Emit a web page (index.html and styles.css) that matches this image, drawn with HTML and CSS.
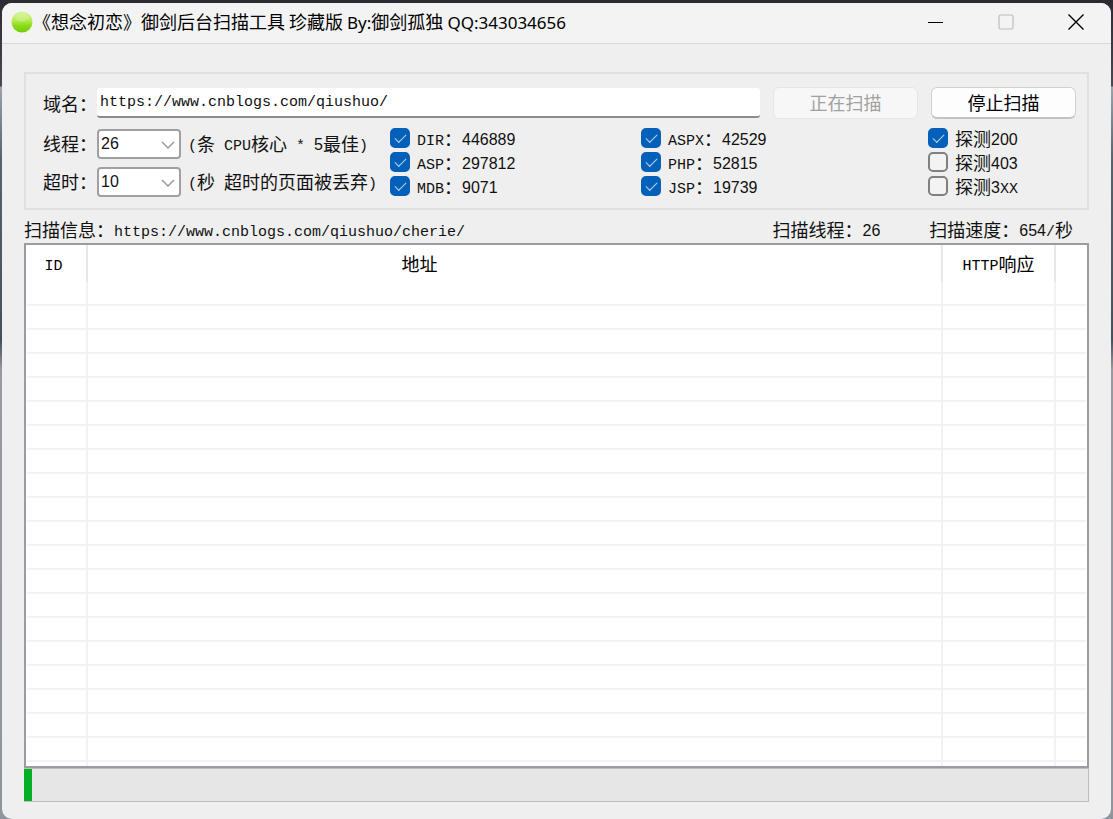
FILE: index.html
```
<!DOCTYPE html>
<html lang="zh-CN">
<head>
<meta charset="utf-8">
<title>御剑后台扫描工具</title>
<link rel="stylesheet" href="styles.css">
</head>
<body>
<div class="window">
  <header class="titlebar">
    <svg class="app-icon" width="22" height="22" viewBox="0 0 22 22" aria-hidden="true">
      <defs>
        <linearGradient id="ball" x1="0" y1="0" x2="0" y2="1">
          <stop offset="0" stop-color="#d8f59a"/>
          <stop offset="0.4" stop-color="#b9ec58"/>
          <stop offset="0.7" stop-color="#88da14"/>
          <stop offset="1" stop-color="#74cc08"/>
        </linearGradient>
      </defs>
      <circle cx="11" cy="11" r="10.5" fill="url(#ball)"/>
      <ellipse cx="11" cy="6.5" rx="7" ry="4" fill="#e6fabb" opacity="0.3"/>
    </svg>
    <h1 class="title">《想念初恋》御剑后台扫描工具 珍藏版 <span class="title-latin">By:</span>御剑孤独 <span class="title-latin">QQ:343034656</span></h1>
    <div class="window-buttons">
      <button type="button" class="window-button" aria-label="最小化"><svg width="16" height="16" viewBox="0 0 16 16"><path d="M0 8.5H15" stroke="#000" fill="none"/></svg></button>
      <button type="button" class="window-button" aria-label="最大化" disabled><svg width="16" height="16" viewBox="0 0 16 16"><rect x="1" y="1" width="14" height="14" rx="1.5" stroke="#bdbdbd" stroke-width="1.2" fill="none"/></svg></button>
      <button type="button" class="window-button" aria-label="关闭"><svg width="16" height="16" viewBox="0 0 16 16"><path d="M.5 .5L15.500 15.500M15.500 .5L.5 15.500" stroke="#000" stroke-width="1.400" fill="none"/></svg></button>
    </div>
  </header>

  <main class="content">
    <form class="panel">
      <div class="domain-row">
        <label for="domain">域名：</label>
        <input class="domain" id="domain" type="text" value="https://www.cnblogs.com/qiushuo/">
        <button type="button" class="action" disabled>正在扫描</button>
        <button type="button" class="action">停止扫描</button>
      </div>
      <div class="options">
        <div class="limits">
          <div class="limit">
            <label for="threads">线程：</label>
            <span class="combo">
              <select id="threads"><option>26</option></select>
              <svg class="arrow" width="14" height="8" viewBox="0 0 14 8" aria-hidden="true"><path d="M1 1L7 7L13 1"/></svg>
            </span>
            <span class="hint"><span class="mono">(</span>条<span class="mono"> CPU</span>核心<span class="mono"> * </span><span class="num">5</span>最佳<span class="mono">)</span></span>
          </div>
          <div class="limit">
            <label for="timeout">超时：</label>
            <span class="combo">
              <select id="timeout"><option>10</option></select>
              <svg class="arrow" width="14" height="8" viewBox="0 0 14 8" aria-hidden="true"><path d="M1 1L7 7L13 1"/></svg>
            </span>
            <span class="hint"><span class="mono">(</span>秒<span class="mono"> </span>超时的页面被丢弃<span class="mono">)</span></span>
          </div>
        </div>
        <div class="checks">
          <label class="check"><input type="checkbox" checked><span><span class="mono">DIR</span>：<span class="num">446889</span></span></label>
          <label class="check"><input type="checkbox" checked><span><span class="mono">ASP</span>：<span class="num">297812</span></span></label>
          <label class="check"><input type="checkbox" checked><span><span class="mono">MDB</span>：<span class="num">9071</span></span></label>
        </div>
        <div class="checks">
          <label class="check"><input type="checkbox" checked><span><span class="mono">ASPX</span>：<span class="num">42529</span></span></label>
          <label class="check"><input type="checkbox" checked><span><span class="mono">PHP</span>：<span class="num">52815</span></span></label>
          <label class="check"><input type="checkbox" checked><span><span class="mono">JSP</span>：<span class="num">19739</span></span></label>
        </div>
        <div class="checks">
          <label class="check"><input type="checkbox" checked><span>探测<span class="num">200</span></span></label>
          <label class="check"><input type="checkbox"><span>探测<span class="num">403</span></span></label>
          <label class="check"><input type="checkbox"><span>探测<span class="num">3</span><span class="mono">XX</span></span></label>
        </div>
      </div>
    </form>

    <div class="status">
      <span class="status-url">扫描信息：<span class="mono">https://www.cnblogs.com/qiushuo/cherie/</span></span>
      <span>扫描线程：<span class="num">26</span></span>
      <span class="status-speed">扫描速度：<span class="num">654</span><span class="mono">/</span>秒</span>
    </div>

    <div class="list">
      <table class="results">
        <colgroup><col class="col-id"><col><col class="col-http"><col class="col-rest"></colgroup>
        <thead><tr><th class="id"><span class="mono">ID</span></th><th class="address">地址</th><th><span class="mono">HTTP</span>响应</th><th></th></tr></thead>
        <tbody>
          <tr><td></td><td></td><td></td><td></td></tr>
          <tr><td></td><td></td><td></td><td></td></tr>
          <tr><td></td><td></td><td></td><td></td></tr>
          <tr><td></td><td></td><td></td><td></td></tr>
          <tr><td></td><td></td><td></td><td></td></tr>
          <tr><td></td><td></td><td></td><td></td></tr>
          <tr><td></td><td></td><td></td><td></td></tr>
          <tr><td></td><td></td><td></td><td></td></tr>
          <tr><td></td><td></td><td></td><td></td></tr>
          <tr><td></td><td></td><td></td><td></td></tr>
          <tr><td></td><td></td><td></td><td></td></tr>
          <tr><td></td><td></td><td></td><td></td></tr>
          <tr><td></td><td></td><td></td><td></td></tr>
          <tr><td></td><td></td><td></td><td></td></tr>
          <tr><td></td><td></td><td></td><td></td></tr>
          <tr><td></td><td></td><td></td><td></td></tr>
          <tr><td></td><td></td><td></td><td></td></tr>
          <tr><td></td><td></td><td></td><td></td></tr>
          <tr><td></td><td></td><td></td><td></td></tr>
          <tr><td></td><td></td><td></td><td></td></tr>
          <tr><td></td><td></td><td></td><td></td></tr>
        </tbody>
      </table>
    </div>
    <progress class="progress" value="8" max="1063" aria-label="扫描进度"></progress>
  </main>
</div>
</body>
</html>
```

FILE: styles.css
```
* {
  box-sizing: border-box;
}

body {
  margin: 0;
  min-height: 100vh;
  padding: 3px 2px 0;
  display: flex;
  background: linear-gradient(#2b2932 0, #4a4850 86px, #9aa3aa 87px, #55636d 160px, #46505a 340px, #9a999f 370px, #8f959d 100%);
  font-family: "Liberation Sans", "Noto Sans CJK SC", sans-serif;
  font-size: 18px;
  line-height: 24px;
  color: #111;
}

.window {
  flex: 1;
  min-width: 0;
  display: flex;
  flex-direction: column;
  background: #efefef;
  border-radius: 10px;
  overflow: hidden;
}

.titlebar {
  display: flex;
  align-items: center;
  height: 41px;
  padding: 0 0 2px 9px;
  background: #f3f3f3;
  border-bottom: 1px solid #d9d9d9;
}

.title {
  flex: 1;
  margin: 0;
  font-family: "Noto Sans CJK SC", sans-serif;
  font-size: 18px;
  font-weight: 400;
  color: #000;
  white-space: nowrap;
}

.title-latin {
  font-family: "Noto Sans", sans-serif;
  font-size: 17px;
}

.window-buttons {
  display: flex;
}

.window-button {
  width: 70px;
  height: 38px;
  padding: 0;
  border: 0;
  background: none;
  display: grid;
  place-items: center;
}

.content {
  flex: 1;
  display: flex;
  flex-direction: column;
  padding: 28px 22px 17px;
}

.panel {
  padding: 13px 11px 10px 17px;
  border: 2px solid #e0e0e0;
  font-family: "Noto Sans CJK SC", sans-serif;
}

.mono,
.domain {
  font-family: "Liberation Mono", monospace;
  font-size: 15px;
}

.num {
  font-family: "Liberation Sans", sans-serif;
  font-size: 16px;
}

.mono,
.num {
  line-height: 16px;
  vertical-align: 1px;
  white-space: pre;
}

.domain-row {
  display: flex;
  align-items: center;
  gap: 13px;
  white-space: nowrap;
}

.domain-row label {
  margin-right: -13px;
}

.domain {
  flex: 1;
  min-width: 0;
  height: 30px;
  padding: 0 3px;
  border: 0;
  border-bottom: 2px solid #8c8c8c;
  border-radius: 3px;
  background: #fff;
  color: #111;
}

.action {
  width: 145px;
  height: 32px;
  padding: 0 0 2px;
  border: 1px solid #d0d0d0;
  border-bottom: 2px solid #c2c2c2;
  border-radius: 6px;
  background: #fdfdfd;
  font-family: "Noto Sans CJK SC", sans-serif;
  font-size: 18px;
  line-height: 24px;
  color: #000;
}

.action:disabled {
  border: 1px solid #e6e6e6;
  background: #f7f7f7;
  color: #a0a0a0;
}

.options {
  display: grid;
  grid-template-columns: 347px 251px 1fr 148px;
  padding-top: 7px;
  white-space: nowrap;
}

.limits {
  display: grid;
  align-content: start;
  gap: 8px;
  padding-top: 3px;
}

.limit {
  display: flex;
  align-items: center;
  height: 30px;
}

.limit label,
.hint {
  padding-bottom: 3px;
}

.hint {
  padding-left: 7px;
}

.combo {
  position: relative;
  width: 84px;
}

.combo select {
  appearance: none;
  display: block;
  width: 100%;
  height: 30px;
  padding: 0 2px 2px;
  border: 2px solid #a0a0a0;
  border-radius: 4px;
  background: #fff;
  font-family: "Liberation Sans", sans-serif;
  font-size: 16px;
  color: #111;
}

.arrow {
  position: absolute;
  right: 6px;
  top: 12px;
  pointer-events: none;
  fill: none;
  stroke: #9a9a9a;
  stroke-width: 1.5;
}

.checks {
  display: flex;
  flex-direction: column;
}

.check {
  display: flex;
  align-items: center;
  gap: 7px;
  height: 24px;
}

.check input {
  appearance: none;
  flex: none;
  width: 20px;
  height: 20px;
  margin: 0;
  display: grid;
  place-items: center;
  border: 2px solid #808080;
  border-radius: 5px;
  background: #f3f3f3;
}

.check input:checked {
  border-color: #0560ba;
  background: #0560ba;
}

.check input:checked::before {
  content: "";
  width: 10px;
  height: 5px;
  margin-bottom: 3px;
  border: solid #b8d5f0;
  border-width: 0 0 1px 1px;
  transform: rotate(-45deg);
}

.status {
  display: flex;
  align-items: center;
  height: 33px;
  padding: 5px 16px 0 0;
  font-family: "Noto Sans CJK SC", sans-serif;
  white-space: nowrap;
}

.status-url {
  flex: 1;
}

.status-speed {
  padding-left: 49px;
}

.list {
  flex: 1 1 0;
  min-height: 200px;
  overflow: hidden;
  padding: 0 1px 2px;
  border: 2px solid #999da3;
  background: #fff;
}

.results {
  width: 100%;
  table-layout: fixed;
  border-collapse: separate;
  border-spacing: 0;
  font-family: "Noto Sans CJK SC", sans-serif;
}

.col-id {
  width: 61px;
}

.col-http {
  width: 113px;
}

.col-rest {
  width: 30px;
}

.results th {
  height: 37px;
  padding: 0 0 2px;
  border-right: 2px solid #e8e8e8;
  font-weight: 400;
  color: #000;
}

.results .id {
  padding-right: 6px;
}

.results .address {
  padding-right: 190px;
}

.results td {
  height: 24px;
  padding: 0;
  border-right: 2px solid #f2f2f2;
  border-bottom: 2px solid #f2f2f2;
}

.results th:last-child,
.results td:last-child {
  border-right: 0;
}

.progress {
  appearance: none;
  display: block;
  width: 100%;
  height: 34px;
  border: 1px solid #bdbdbd;
  border-left: 0;
  background: #e6e6e6;
}

.progress::-webkit-progress-bar {
  background: #e6e6e6;
}

.progress::-webkit-progress-value {
  background: #06b025;
}
```
